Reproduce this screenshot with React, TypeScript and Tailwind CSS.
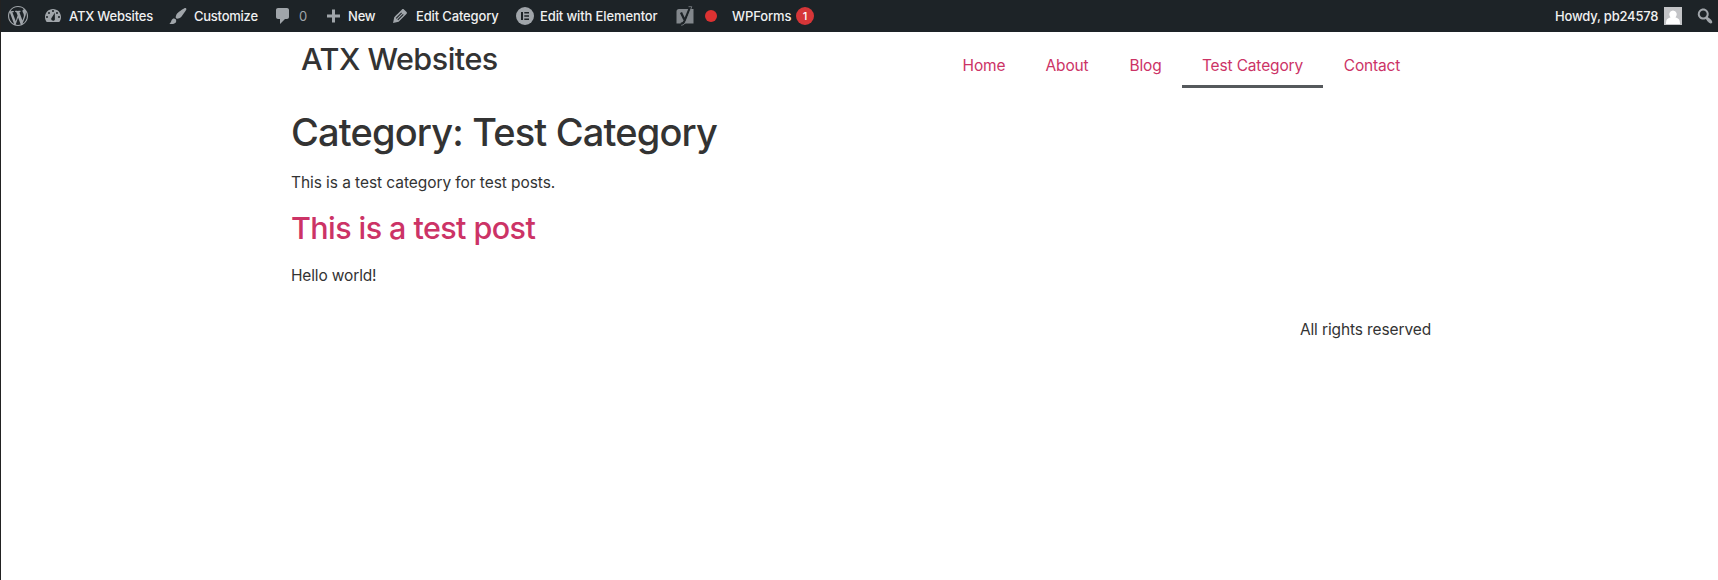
import type { ReactNode } from "react";

function Icon({ d, className }: { d: string; className: string }) {
  return (
    <svg viewBox="0 0 20 20" className={`shrink-0 fill-[#a0a5aa] ${className}`}>
      <path fillRule="evenodd" d={d} />
    </svg>
  );
}

const WORDPRESS =
  "M20 10c0-5.51-4.49-10-10-10C4.48 0 0 4.49 0 10c0 5.52 4.48 10 10 10 5.51 0 10-4.48 10-10zM7.78 15.37L4.37 6.22c.55-.02 1.17-.08 1.17-.08.5-.06.44-1.13-.06-1.11 0 0-1.45.11-2.37.11-.18 0-.37 0-.58-.01C4.12 2.69 6.87 1.11 10 1.11c2.33 0 4.45.87 6.05 2.34-.68-.11-1.65.39-1.65 1.58 0 .74.45 1.36.9 2.1.35.61.55 1.36.55 2.46 0 1.49-1.4 5-1.4 5l-3.03-8.37c.54-.02.82-.17.82-.17.5-.05.44-1.25-.06-1.22 0 0-1.44.12-2.38.12-.87 0-2.33-.12-2.33-.12-.5-.03-.56 1.2-.06 1.22l.92.08 1.26 3.41zM17.41 10c.24-.64.74-1.87.43-4.25.7 1.29 1.05 2.71 1.05 4.25 0 3.29-1.73 6.24-4.4 7.78.97-2.59 1.94-5.2 2.92-7.78zM6.1 18.09C3.12 16.65 1.11 13.53 1.11 10c0-1.3.23-2.48.72-3.59C3.25 10.3 4.67 14.2 6.1 18.09zm4.03-6.63l2.58 6.98c-.86.29-1.76.45-2.71.45-.79 0-1.57-.11-2.29-.33.81-2.38 1.62-4.74 2.42-7.1z";
const GAUGE =
  "M3.76 16h12.48c1.1-1.37 1.76-3.11 1.76-5 0-4.42-3.58-8-8-8s-8 3.58-8 8c0 1.89.66 3.63 1.76 5zM10 4a1 1 0 1 1 0 2a1 1 0 0 1 0-2zM6 6a1 1 0 1 1 0 2a1 1 0 0 1 0-2zM14 6a1 1 0 1 1 0 2a1 1 0 0 1 0-2zM4 10a1 1 0 1 1 0 2a1 1 0 0 1 0-2zM16 10a1 1 0 1 1 0 2a1 1 0 0 1 0-2zM11.800 6.800L11.900 12.800c.4 2.800-4 2.600-3.700-.2z";
const BRUSH =
  "M18.33 3.57s.27-.8-.31-1.36c-.53-.52-1.22-.24-1.22-.24-.61.3-5.76 3.47-7.67 5.57-.86.96-2.06 3.79-1.09 4.82.92.98 3.96-.17 4.79-1 2.06-2.06 5.21-7.17 5.5-7.79zM1.4 17.65c2.37-1.56 1.46-3.41 3.23-4.64.93-.65 2.22-.62 3.08.29.63.67.8 2.57-.16 3.46-1.57 1.45-4 1.55-6.15.89z";
const COMMENT =
  "M5 2h9c1.1 0 2 .9 2 2v7c0 1.1-.9 2-2 2h-2l-5 5v-5H5c-1.1 0-2-.9-2-2V4c0-1.1.9-2 2-2z";
const PLUS = "M17 8.500v3h-5v5H9v-5H4v-3h5v-5h3v5z";
const PENCIL =
  "M13.89 3.39l2.71 2.72c.46.46.42 1.24.03 1.64l-8.01 8.02-5.56 1.16 1.16-5.58s7.6-7.63 7.99-8.03c.39-.39 1.22-.39 1.68.07zM11.300 6.500L5.800 12l.75.75 5.500-5.500zM12.900 8.100l-5.500 5.500.75.75 5.500-5.500z";
const SEARCH =
  "M12.14 4.18c1.87 1.87 2.11 4.75.72 6.89.12.1.22.21.36.31.2.16.47.36.81.59.34.24.56.39.66.47.42.31.73.57.94.78.32.32.6.65.84 1 .25.35.44.69.59 1.04.14.35.21.68.18 1-.02.32-.14.59-.36.81s-.49.34-.81.36c-.31.02-.65-.04-.99-.19-.35-.14-.7-.34-1.04-.59-.35-.24-.68-.52-1-.84-.21-.21-.47-.52-.77-.93-.1-.13-.25-.35-.47-.66-.22-.32-.4-.57-.56-.78-.16-.2-.29-.35-.44-.5-2.07 1.09-4.69.76-6.44-.98-2.14-2.15-2.14-5.64 0-7.78 2.15-2.15 5.63-2.15 7.78 0zm-1.41 6.36c1.36-1.37 1.36-3.58 0-4.95-1.37-1.37-3.59-1.37-4.95 0-1.37 1.37-1.37 3.58 0 4.95 1.36 1.37 3.58 1.37 4.95 0z";

function BarItem({ children, className }: { children: ReactNode; className: string }) {
  return <a className={`flex shrink-0 items-center whitespace-nowrap ${className}`}>{children}</a>;
}

function AdminBar() {
  return (
    <header className="flex h-8 items-center bg-[#1d2327] pl-[7px] text-[13px] font-medium text-[#f0f0f1]">
      <BarItem className="w-[35px]">
        <Icon d={WORDPRESS} className="size-5" />
      </BarItem>
      <BarItem className="w-[125px]">
        <Icon d={GAUGE} className="size-5" />
        <span className="ml-[6px] tracking-[-0.2px]">ATX Websites</span>
      </BarItem>
      <BarItem className="w-[105px]">
        <Icon d={BRUSH} className="size-5" />
        <span className="ml-[6px] tracking-[-0.25px]">Customize</span>
      </BarItem>
      <BarItem className="w-[50px]">
        <Icon d={COMMENT} className="size-5" />
        <span className="ml-[6px] font-normal text-[#a0a5aa]">0</span>
      </BarItem>
      <BarItem className="w-[67px]">
        <Icon d={PLUS} className="size-5" />
        <span className="ml-[5px] tracking-[-0.2px]">New</span>
      </BarItem>
      <BarItem className="w-[126px]">
        <Icon d={PENCIL} className="size-5" />
        <span className="ml-[6px] tracking-[-0.15px]">Edit Category</span>
      </BarItem>
      <BarItem className="w-[159px]">
        <svg viewBox="0 0 18 18" className="size-[18px] shrink-0">
          <circle cx="9" cy="9" r="9" fill="#a0a5aa" />
          <path d="M5 5h2v8H5zM8.300 5H13v1.600H8.300zM8.300 8.200H13v1.600H8.300zM8.300 11.400H13V13H8.300z" fill="#1d2327" />
        </svg>
        <span className="ml-[6px] tracking-[-0.12px]">Edit with Elementor</span>
      </BarItem>
      <BarItem className="w-[57px]">
        <svg viewBox="0 0 20 20" className="size-5 shrink-0">
          <path d="M4 3h14.500v14.500H1.500V5.500A2.500 2.500 0 0 1 4 3z" fill="#82878c" />
          <path d="M6 6.500l3.300 7M15.300 1L10 14c-.9 2.700-1.900 4-4.300 4" stroke="#1d2327" strokeWidth="2.300" fill="none" />
          <path d="M13.500.7h3.300L11.200 15c-1 2.700-2.300 4-5 4.300" stroke="#82878c" strokeWidth=".8" fill="none" />
        </svg>
        <span className="ml-[10px] size-3 rounded-full bg-[#dc3232]" />
      </BarItem>
      <BarItem className="">
        <span className="w-[64px] tracking-[-0.1px]">WPForms</span>
        <span className="flex size-[18px] items-center justify-center rounded-full bg-[#d63638] text-[11px] text-white">1</span>
      </BarItem>
      <BarItem className="ml-auto w-[140px]">
        <span className="w-[109px] tracking-[-0.2px]">Howdy, pb24578</span>
        <svg viewBox="0 0 18 18" className="size-[18px]">
          <path d="M0 0h18v18H0z" fill="#c3c4c7" />
          <path d="M9 3.500a3.800 4 0 0 1 2.500 7c3 .6 4.500 2 4.500 6.500H2c0-4.500 1.500-5.900 4.500-6.500A3.800 4 0 0 1 9 3.500z" fill="#fff" />
        </svg>
      </BarItem>
      <BarItem className="w-[23px]">
        <Icon d={SEARCH} className="size-5" />
      </BarItem>
    </header>
  );
}

const NAV = [
  { label: "Home", box: "w-[82px]" },
  { label: "About", box: "w-[84px]" },
  { label: "Blog", box: "w-[73px]" },
  { label: "Test Category", box: "w-[141px]" },
  { label: "Contact", box: "w-[98px]" },
];

export default function App() {
  return (
    <div className="h-[580px] overflow-hidden border-l border-[#222] bg-white font-[Inter,sans-serif] text-[15.5px] leading-6 text-[#333]">
      <AdminBar />
      <div className="ml-[290px] w-[1140px]">
        <div className="flex justify-between pr-[10px]">
          <div className="ml-[10px] pt-[9px] text-[30.5px] leading-[36px] font-medium whitespace-nowrap tracking-[-0.5px]">ATX Websites</div>
          <nav className="flex pt-[11px] text-[#c36]">
            {NAV.map((item) => (
              <a
                key={item.label}
                className={`flex h-[45px] items-center justify-center border-b-[3px] pt-[3px] tracking-[-0.15px] whitespace-nowrap ${item.box} ${item.label === "Test Category" ? "border-[#55595c]" : "border-transparent"}`}
              >
                {item.label}
              </a>
            ))}
          </nav>
        </div>
        <h1 className="mt-[20px] text-[38px] leading-[48px] font-medium tracking-[-0.84px]">Category: Test Category</h1>
        <p className="mt-[15px] tracking-[-0.07px]">This is a test category for test posts.</p>
        <h2 className="mt-[14px] text-[30.5px] leading-[38px] font-medium tracking-[-0.58px] text-[#c36]">This is a test post</h2>
        <p className="mt-[17px] tracking-[-0.15px]">Hello world!</p>
        <footer className="mt-[30px] text-right tracking-[-0.12px]">All rights reserved</footer>
      </div>
    </div>
  );
}
